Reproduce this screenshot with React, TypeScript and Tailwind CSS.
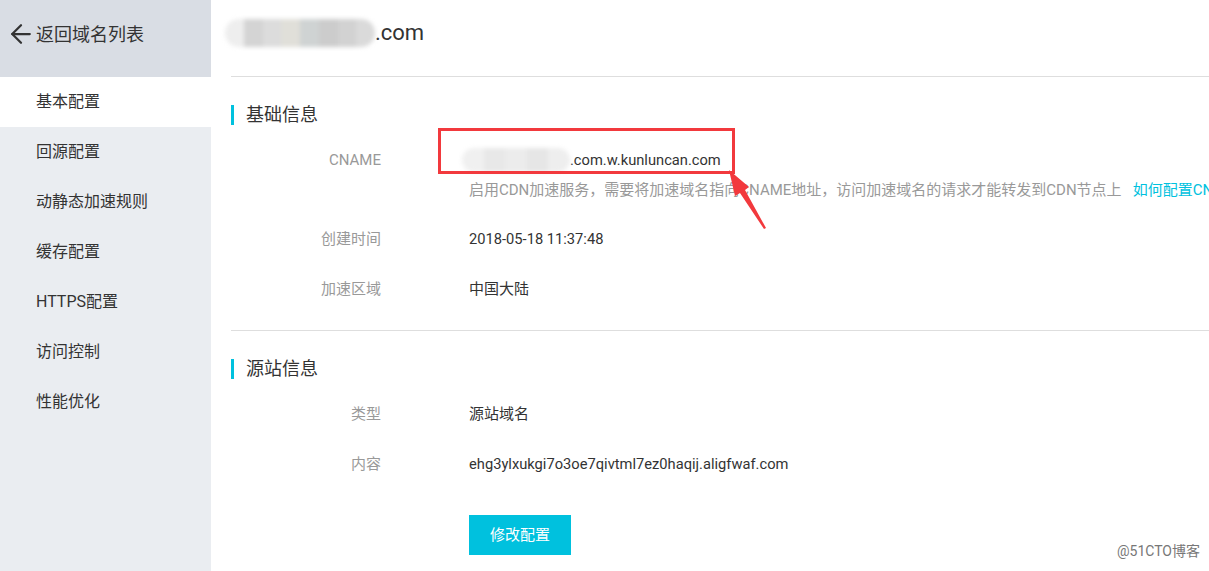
import { ArrowLeft } from 'lucide-react'
import { clsx } from 'clsx'

const menu = ['基本配置', '回源配置', '动静态加速规则', '缓存配置', 'HTTPS配置', '访问控制', '性能优化']

const font = { fontFamily: '"Roboto", "Noto Sans CJK SC", sans-serif' }

function SectionTitle({ title }: { title: string }) {
  return (
    <div className="flex h-5 items-center">
      <span className="h-5 w-[3px] bg-[#00c1de]" />
      <span className="ml-3 text-[18px] leading-5 text-[#333]">{title}</span>
    </div>
  )
}

function Row({ label, children, className }: { label: string; children: React.ReactNode; className?: string }) {
  return (
    <div className={clsx('flex h-[30px] items-center', className)}>
      <div className="w-[150px] text-right text-[15px] text-[#999]">{label}</div>
      <div className="ml-[88px] whitespace-nowrap text-[14.7px] text-[#333]">{children}</div>
    </div>
  )
}

// blurred block used where the screenshot hides the domain prefix
function Blur({ colors, className }: { colors: string[]; className?: string }) {
  return (
    <div className={clsx('flex overflow-hidden rounded-full blur-[2px]', className)}>
      {colors.map((c, i) => (
        <span key={i} className="h-full flex-1" style={{ background: c }} />
      ))}
    </div>
  )
}

export default function App() {
  return (
    <div className="relative flex h-[571px] w-[1209px] overflow-hidden bg-white" style={font}>
      {/* Sidebar */}
      <aside className="flex w-[211px] shrink-0 flex-col bg-[#eaedf1]">
        <div className="flex h-[77px] items-center bg-[#d9dde4] pb-[9px] pl-[6px] text-[#333]">
          <ArrowLeft className="h-[30px] w-[30px]" strokeWidth={1.8} />
          <span className="text-[18px]">返回域名列表</span>
        </div>
        <nav>
          {menu.map((item, i) => (
            <div
              key={item}
              className={clsx(
                'flex h-[50px] items-center pl-9 text-[16px] text-[#333]',
                i === 0 && 'bg-white'
              )}
            >
              {item}
            </div>
          ))}
        </nav>
      </aside>

      {/* Main */}
      <main className="flex-1 overflow-hidden pl-5">
        <div className="h-[77px] border-b border-[#dedede]">
          <div className="-ml-1.5 flex items-center pt-[19px]">
            <Blur
              className="h-[28px] w-[150px]"
              colors={['#eeeeee', '#d4d4d4', '#dcdcdc', '#e0dfd9', '#cfd3d3', '#cccccc', '#d2d2d2', '#dadada']}
            />
            <span className="text-[22px] leading-7 text-[#333]">.com</span>
          </div>
        </div>

        <div className="mt-[28px]">
          <SectionTitle title="基础信息" />
        </div>
        <Row label="CNAME" className="mt-5">
          <span className="flex items-center">
            <Blur className="-ml-[7px] h-[24px] w-[108px]" colors={['#f0f0f0', '#e8e8e8', '#ececec', '#e6e6e6', '#eeeeee']} />
            <span>.com.w.kunluncan.com</span>
          </span>
        </Row>
        <div className="ml-[238px] flex h-[30px] items-center whitespace-nowrap text-[15px] text-[#999]">
          启用CDN加速服务，需要将加速域名指向CNAME地址，访问加速域名的请求才能转发到CDN节点上
          <a className="ml-[11px] text-[#00c1de]">如何配置CN</a>
        </div>
        <Row label="创建时间" className="mt-[19px]">
          2018-05-18 11:37:48
        </Row>
        <Row label="加速区域" className="mt-5">
          <span className="text-[15px]">中国大陆</span>
        </Row>

        <div className="mt-[26px] border-t border-[#dedede]" />

        <div className="mt-[28px]">
          <SectionTitle title="源站信息" />
        </div>
        <Row label="类型" className="mt-5">
          <span className="text-[15px]">源站域名</span>
        </Row>
        <Row label="内容" className="mt-5">
          ehg3ylxukgi7o3oe7qivtml7ez0haqij.aligfwaf.com
        </Row>
        <div className="ml-[238px] mt-[36px]">
          <button className="h-10 w-[102px] bg-[#00c1de] text-[15px] text-white">修改配置</button>
        </div>
      </main>

      {/* Annotation: red box + arrow */}
      <div className="pointer-events-none absolute left-[438px] top-[128px] h-[46px] w-[297px] border-[3px] border-[#f2393d]" />
      <svg className="pointer-events-none absolute left-0 top-0" width="1209" height="571">
        <polygon
          points="729,170 749,187 745,190 766,228 764,229 740,193 735,196"
          fill="#f2393d"
        />
      </svg>

      <div className="pointer-events-none absolute bottom-[9px] right-[9px] text-[14px] text-[#777]">@51CTO博客</div>
    </div>
  )
}
